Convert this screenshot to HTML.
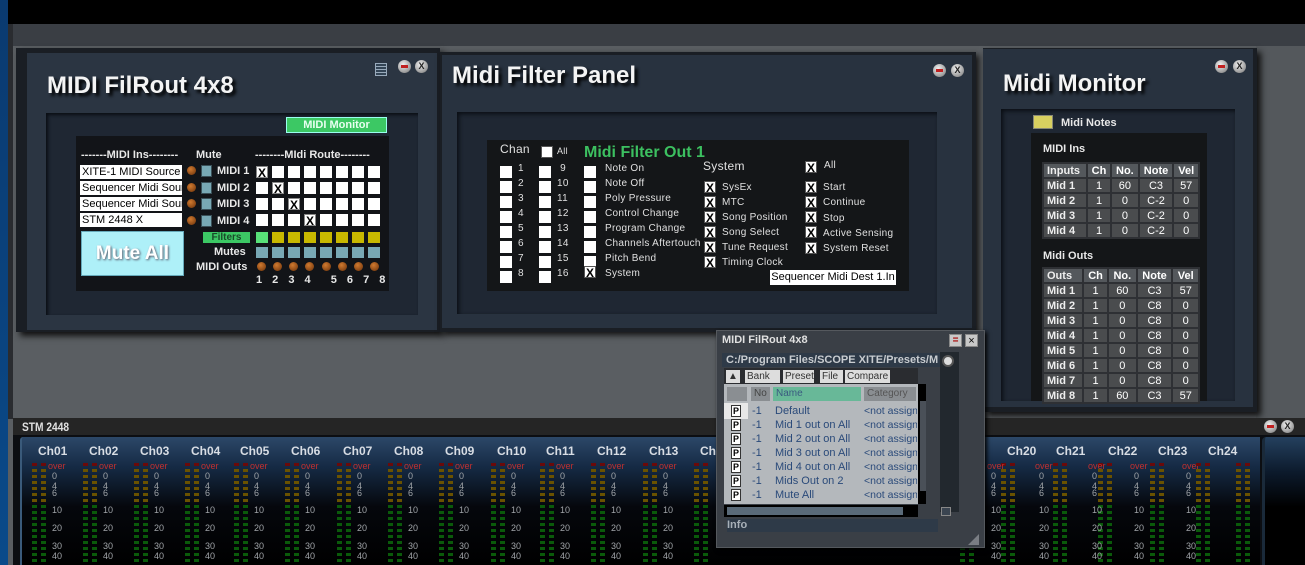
<!DOCTYPE html>
<html><head><meta charset="utf-8"><style>
*{margin:0;padding:0;box-sizing:border-box}
body{width:1305px;height:565px;overflow:hidden;background:#5a5e62;font-family:"Liberation Sans",sans-serif;position:relative}
div,span,i,b{position:absolute}
.t{font-weight:bold;color:#f4f4f4;text-shadow:3px 3px 3px #000;font-size:24px;white-space:nowrap}
.btn{width:13px;height:13px;border-radius:50%;background:radial-gradient(circle at 40% 35%,#f0f0f0,#999 70%,#555);font-size:9px;font-weight:bold;text-align:center;line-height:13px;color:#222}
.min::after{content:"";position:absolute;left:3px;top:5px;width:7px;height:3px;background:#c02020}
.in{background:#fff;color:#000;height:14px;width:102px;font-size:11px;line-height:14px;padding-left:2px;overflow:hidden;white-space:nowrap}
.dot{width:9px;height:9px;border-radius:50%;background:radial-gradient(circle at 40% 35%,#d07a30,#6a3008)}
.ms{width:11px;height:12px;background:#78a8b4;border:1px solid #3a5058}
.cb{width:12px;height:12px;background:#fff}
.cb.x{font-size:12px;font-weight:bold;line-height:12px;text-align:center;color:#000;border:1px solid #888}
.lb{font-weight:bold;font-size:11px;color:#e8e8e8}
.ck{width:12px;height:12px;background:#fff;border:1px solid #555}
.ck.x::after{content:"X";position:absolute;left:1px;top:-1px;font-size:12px;font-weight:bold;color:#000}
.fl{font-size:10px;color:#e0e0e0;white-space:nowrap;letter-spacing:.3px}
.tb td{background:#4a4c4e;border:2px solid #2e3034;color:#fff;font-size:11px;height:15px;padding:0 3px;text-align:center}
.tb td:first-child{text-align:left;font-weight:bold;color:#eee}
.tb tr:first-child td{font-weight:bold;background:#54585c}
.tb{border-collapse:collapse;position:absolute}
.ch{top:437px;width:51px;height:128px}
.ch b{top:7px;left:8px;font-size:12px;color:#d8dde4}
.lr{width:5px;height:3px;background:#6a0a0a;top:26px}
.lo{width:5px;top:32px;height:36px;background:repeating-linear-gradient(#6a5200 0 3px,transparent 3px 6px)}
.lg{width:5px;top:68px;height:60px;background:repeating-linear-gradient(#0a5a0a 0 3px,transparent 3px 6px)}
.sc span{left:22px;font-size:9px;color:#a0a4a8}
.sc span:first-child{color:#c03030;left:18px}
.tbb{top:370px;height:13px;background:#ddd;font-size:10px;line-height:13px;color:#333;padding-left:2px;white-space:nowrap;overflow:hidden}
.pi{left:731px;width:10px;height:12px;background:#fff;border:1px solid #333;font-size:9px;font-weight:bold;text-align:center;line-height:10px;color:#000}
</style></head><body>
<div style="left:0;top:0;width:8px;height:565px;background:linear-gradient(#0a3a70,#0a4a8a)"></div>
<div style="left:8px;top:0;width:1297px;height:24px;background:#000"></div>
<div style="left:8px;top:24px;width:1297px;height:22px;background:#3a3e44"></div>
<div style="left:8px;top:24px;width:5px;height:395px;background:#2a2c30"></div>
<div style="left:1256px;top:46px;width:49px;height:372px;background:#54585c"></div>

<!-- Panel 1 -->
<div style="left:16px;top:48px;width:424px;height:284px;background:#1a1e24;box-shadow:4px 4px 6px #111"></div>
<div style="left:27px;top:53px;width:410px;height:277px;background:#2b3542"></div>
<div class="t" style="left:47px;top:72px">MIDI FilRout 4x8</div>
<div style="left:375px;top:63px;width:12px;height:13px;border:1px solid #9ab;background:repeating-linear-gradient(#345 0 2px,#9ab 2px 3px)"></div>
<div class="btn min" style="left:398px;top:60px"></div>
<div class="btn" style="left:415px;top:60px">X</div>
<div style="left:46px;top:113px;width:372px;height:202px;background:#1f2733;box-shadow:2px 2px 3px #0a0e14 inset"></div>
<div style="left:286px;top:117px;width:101px;height:16px;background:#3cc864;border:1px solid #9fe;color:#e8fff0;font-weight:bold;font-size:11px;text-align:center;line-height:14px">MIDI Monitor</div>
<div style="left:76px;top:136px;width:313px;height:155px;background:#121418"></div>
<div class="lb" style="left:81px;top:149px">-------MIDI Ins--------</div>
<div class="lb" style="left:196px;top:149px">Mute</div>
<div class="lb" style="left:255px;top:149px">--------MIdi Route--------</div>
<div class="in" style="left:80px;top:165px">XITE-1 MIDI Source</div>
<div class="in" style="left:80px;top:181px">Sequencer Midi Source</div>
<div class="in" style="left:80px;top:197px">Sequencer Midi Source</div>
<div class="in" style="left:80px;top:213px">STM 2448 X</div>
<div class="dot" style="left:187px;top:166px"></div><div class="dot" style="left:187px;top:183px"></div><div class="dot" style="left:187px;top:199px"></div><div class="dot" style="left:187px;top:216px"></div>
<div class="ms" style="left:201px;top:165px"></div><div class="ms" style="left:201px;top:182px"></div><div class="ms" style="left:201px;top:198px"></div><div class="ms" style="left:201px;top:215px"></div>
<div class="lb" style="left:217px;top:165px">MIDI 1</div><div class="lb" style="left:217px;top:182px">MIDI 2</div><div class="lb" style="left:217px;top:198px">MIDI 3</div><div class="lb" style="left:217px;top:215px">MIDI 4</div>
<div style="left:256px;top:166px;width:128px;height:60px;background:repeating-linear-gradient(90deg,#fff 0 12px,transparent 12px 16px);-webkit-mask:repeating-linear-gradient(#000 0 12px,transparent 12px 16px)"></div>
<div class="cb x" style="left:256px;top:166px">X</div><div class="cb x" style="left:272px;top:182px">X</div><div class="cb x" style="left:288px;top:198px">X</div><div class="cb x" style="left:304px;top:214px">X</div>
<div style="left:81px;top:231px;width:103px;height:45px;background:#aef0f8;border:1px solid #6ab;color:#fff;font-weight:bold;font-size:19px;text-align:center;line-height:44px;text-shadow:1px 1px 2px #556">Mute All</div>
<div style="left:203px;top:232px;width:47px;height:11px;background:#3cc864;font-size:10px;font-weight:bold;color:#1a4a2a;text-align:center;line-height:11px">Filters</div>
<div style="left:256px;top:232px;width:12px;height:11px;background:#58e078"></div>
<div style="left:272px;top:232px;width:112px;height:11px;background:repeating-linear-gradient(90deg,#c8b800 0 12px,transparent 12px 16px)"></div>
<div class="lb" style="left:214px;top:246px">Mutes</div>
<div style="left:256px;top:247px;width:128px;height:11px;background:repeating-linear-gradient(90deg,#78a8b4 0 12px,transparent 12px 16px)"></div>
<div class="lb" style="left:196px;top:261px">MIDI Outs</div>
<div class="dot" style="left:257px;top:262px"></div><div class="dot" style="left:273px;top:262px"></div><div class="dot" style="left:289px;top:262px"></div><div class="dot" style="left:305px;top:262px"></div><div class="dot" style="left:322px;top:262px"></div><div class="dot" style="left:338px;top:262px"></div><div class="dot" style="left:354px;top:262px"></div><div class="dot" style="left:370px;top:262px"></div>
<div class="lb" style="left:256px;top:274px;word-spacing:7px">1 2 3 4 &nbsp;5 6 7 8</div>

<!-- Panel 2 -->
<div style="left:440px;top:52px;width:536px;height:280px;background:#1a1e24;box-shadow:3px 3px 6px #111"></div>
<div style="left:442px;top:55px;width:530px;height:273px;background:#28323f"></div>
<div class="t" style="left:452px;top:62px">Midi Filter Panel</div>
<div class="btn min" style="left:933px;top:64px"></div>
<div class="btn" style="left:951px;top:64px">X</div>
<div style="left:457px;top:112px;width:480px;height:202px;background:#1f2733;box-shadow:2px 2px 4px #0a0e14 inset"></div>
<div style="left:487px;top:140px;width:422px;height:151px;background:#141618"></div>
<div class="fl" style="left:500px;top:142px;font-size:12px">Chan</div>
<div class="ck" style="left:541px;top:146px"></div><div class="fl" style="left:557px;top:146px;font-size:9px">All</div>
<div style="left:500px;top:166px;width:12px;height:117px;background:repeating-linear-gradient(#fff 0 12px,transparent 12px 15px)"></div>
<div style="left:539px;top:166px;width:12px;height:117px;background:repeating-linear-gradient(#fff 0 12px,transparent 12px 15px)"></div>
<div class="fl" style="left:518px;top:161px;line-height:15px">1<br>2<br>3<br>4<br>5<br>6<br>7<br>8</div>
<div class="fl" style="left:557px;top:161px;line-height:15px">&nbsp;9<br>10<br>11<br>12<br>13<br>14<br>15<br>16</div>
<div style="left:584px;top:144px;font-size:16px;font-weight:bold;color:#3cc060">Midi Filter Out 1</div>
<div style="left:584px;top:166px;width:12px;height:102px;background:repeating-linear-gradient(#fff 0 12px,transparent 12px 15px)"></div>
<div class="ck x" style="left:584px;top:266px"></div>
<div class="fl" style="left:605px;top:161px;line-height:15px">Note On<br>Note Off<br>Poly Pressure<br>Control Change<br>Program Change<br>Channels Aftertouch<br>Pitch Bend<br>System</div>
<div class="fl" style="left:703px;top:159px;font-size:12px">System</div>
<div class="ck x" style="left:704px;top:181px"></div><div class="ck x" style="left:704px;top:196px"></div><div class="ck x" style="left:704px;top:211px"></div><div class="ck x" style="left:704px;top:226px"></div><div class="ck x" style="left:704px;top:241px"></div><div class="ck x" style="left:704px;top:256px"></div>
<div class="fl" style="left:722px;top:180px;line-height:15px">SysEx<br>MTC<br>Song Position<br>Song Select<br>Tune Request<br>Timing Clock</div>
<div class="ck x" style="left:805px;top:161px"></div><div class="fl" style="left:824px;top:160px">All</div>
<div class="ck x" style="left:805px;top:181px"></div><div class="ck x" style="left:805px;top:196px"></div><div class="ck x" style="left:805px;top:211px"></div><div class="ck x" style="left:805px;top:226px"></div><div class="ck x" style="left:805px;top:242px"></div>
<div class="fl" style="left:823px;top:180px;line-height:15.3px">Start<br>Continue<br>Stop<br>Active Sensing<br>System Reset</div>
<div style="left:770px;top:270px;width:126px;height:15px;background:#fff;font-size:11px;color:#000;text-align:center;line-height:15px">Sequencer Midi Dest 1.In</div>

<!-- Panel 3 -->
<div style="left:983px;top:48px;width:274px;height:364px;background:#1a1e24;box-shadow:4px 4px 6px #111"></div>
<div style="left:983px;top:49px;width:270px;height:358px;background:#28323f"></div>
<div class="t" style="left:1003px;top:70px">Midi Monitor</div>
<div class="btn min" style="left:1215px;top:60px"></div>
<div class="btn" style="left:1233px;top:60px">X</div>
<div style="left:1001px;top:109px;width:234px;height:292px;background:#1f2733;box-shadow:2px 2px 4px #0a0e14 inset"></div>
<div style="left:1033px;top:115px;width:20px;height:14px;background:#d8d060;border:1px solid #887"></div>
<div class="lb" style="left:1061px;top:117px">Midi Notes</div>
<div style="left:1031px;top:133px;width:176px;height:268px;background:#141618"></div>
<div class="lb" style="left:1043px;top:143px">MIDI Ins</div>
<table class="tb" style="left:1042px;top:162px;width:158px"><tr><td>Inputs</td><td>Ch</td><td>No.</td><td>Note</td><td>Vel</td></tr>
<tr><td>Mid 1</td><td>1</td><td>60</td><td>C3</td><td>57</td></tr><tr><td>Mid 2</td><td>1</td><td>0</td><td>C-2</td><td>0</td></tr><tr><td>Mid 3</td><td>1</td><td>0</td><td>C-2</td><td>0</td></tr><tr><td>Mid 4</td><td>1</td><td>0</td><td>C-2</td><td>0</td></tr></table>
<div class="lb" style="left:1043px;top:250px">Midi Outs</div>
<table class="tb" style="left:1042px;top:267px;width:158px"><tr><td>Outs</td><td>Ch</td><td>No.</td><td>Note</td><td>Vel</td></tr>
<tr><td>Mid 1</td><td>1</td><td>60</td><td>C3</td><td>57</td></tr><tr><td>Mid 2</td><td>1</td><td>0</td><td>C8</td><td>0</td></tr><tr><td>Mid 3</td><td>1</td><td>0</td><td>C8</td><td>0</td></tr><tr><td>Mid 4</td><td>1</td><td>0</td><td>C8</td><td>0</td></tr><tr><td>Mid 5</td><td>1</td><td>0</td><td>C8</td><td>0</td></tr><tr><td>Mid 6</td><td>1</td><td>0</td><td>C8</td><td>0</td></tr><tr><td>Mid 7</td><td>1</td><td>0</td><td>C8</td><td>0</td></tr><tr><td>Mid 8</td><td>1</td><td>60</td><td>C3</td><td>57</td></tr></table>

<!-- STM bar -->
<div style="left:13px;top:418px;width:1292px;height:17px;background:#252525"></div>
<div style="left:22px;top:420px;font-size:12px;font-weight:bold;color:#e0e0e0;transform:scaleX(.85);transform-origin:left">STM 2448</div>
<div class="btn min" style="left:1264px;top:420px"></div>
<div class="btn" style="left:1281px;top:420px">X</div>
<div style="left:13px;top:435px;width:1292px;height:130px;background:#0c0e12"></div>
<div style="left:20px;top:437px;width:1240px;height:128px;background:linear-gradient(#2c4868,#152a44 30px,#05070c 70px,#000);border-left:2px solid #3a5a7a;border-radius:3px 0 0 0"></div>
<div style="left:1262px;top:437px;width:43px;height:128px;background:linear-gradient(#24405e,#0c1a2c 35px,#000 70px);border-left:3px solid #1a2a3a;border-radius:4px 0 0 0"></div>

<div class="ch" style="left:30px"><b>Ch01</b><i class="lr" style="left:2px"></i><i class="lr" style="left:11px"></i><i class="lo" style="left:2px"></i><i class="lo" style="left:11px"></i><i class="lg" style="left:2px"></i><i class="lg" style="left:11px"></i><div class="sc"><span style="top:24px">over</span><span style="top:34px">0</span><span style="top:44px">4</span><span style="top:51px">6</span><span style="top:68px">10</span><span style="top:86px">20</span><span style="top:104px">30</span><span style="top:114px">40</span></div></div>
<div class="ch" style="left:81px"><b>Ch02</b><i class="lr" style="left:2px"></i><i class="lr" style="left:11px"></i><i class="lo" style="left:2px"></i><i class="lo" style="left:11px"></i><i class="lg" style="left:2px"></i><i class="lg" style="left:11px"></i><div class="sc"><span style="top:24px">over</span><span style="top:34px">0</span><span style="top:44px">4</span><span style="top:51px">6</span><span style="top:68px">10</span><span style="top:86px">20</span><span style="top:104px">30</span><span style="top:114px">40</span></div></div>
<div class="ch" style="left:132px"><b>Ch03</b><i class="lr" style="left:2px"></i><i class="lr" style="left:11px"></i><i class="lo" style="left:2px"></i><i class="lo" style="left:11px"></i><i class="lg" style="left:2px"></i><i class="lg" style="left:11px"></i><div class="sc"><span style="top:24px">over</span><span style="top:34px">0</span><span style="top:44px">4</span><span style="top:51px">6</span><span style="top:68px">10</span><span style="top:86px">20</span><span style="top:104px">30</span><span style="top:114px">40</span></div></div>
<div class="ch" style="left:183px"><b>Ch04</b><i class="lr" style="left:2px"></i><i class="lr" style="left:11px"></i><i class="lo" style="left:2px"></i><i class="lo" style="left:11px"></i><i class="lg" style="left:2px"></i><i class="lg" style="left:11px"></i><div class="sc"><span style="top:24px">over</span><span style="top:34px">0</span><span style="top:44px">4</span><span style="top:51px">6</span><span style="top:68px">10</span><span style="top:86px">20</span><span style="top:104px">30</span><span style="top:114px">40</span></div></div>
<div class="ch" style="left:232px"><b>Ch05</b><i class="lr" style="left:2px"></i><i class="lr" style="left:11px"></i><i class="lo" style="left:2px"></i><i class="lo" style="left:11px"></i><i class="lg" style="left:2px"></i><i class="lg" style="left:11px"></i><div class="sc"><span style="top:24px">over</span><span style="top:34px">0</span><span style="top:44px">4</span><span style="top:51px">6</span><span style="top:68px">10</span><span style="top:86px">20</span><span style="top:104px">30</span><span style="top:114px">40</span></div></div>
<div class="ch" style="left:283px"><b>Ch06</b><i class="lr" style="left:2px"></i><i class="lr" style="left:11px"></i><i class="lo" style="left:2px"></i><i class="lo" style="left:11px"></i><i class="lg" style="left:2px"></i><i class="lg" style="left:11px"></i><div class="sc"><span style="top:24px">over</span><span style="top:34px">0</span><span style="top:44px">4</span><span style="top:51px">6</span><span style="top:68px">10</span><span style="top:86px">20</span><span style="top:104px">30</span><span style="top:114px">40</span></div></div>
<div class="ch" style="left:335px"><b>Ch07</b><i class="lr" style="left:2px"></i><i class="lr" style="left:11px"></i><i class="lo" style="left:2px"></i><i class="lo" style="left:11px"></i><i class="lg" style="left:2px"></i><i class="lg" style="left:11px"></i><div class="sc"><span style="top:24px">over</span><span style="top:34px">0</span><span style="top:44px">4</span><span style="top:51px">6</span><span style="top:68px">10</span><span style="top:86px">20</span><span style="top:104px">30</span><span style="top:114px">40</span></div></div>
<div class="ch" style="left:386px"><b>Ch08</b><i class="lr" style="left:2px"></i><i class="lr" style="left:11px"></i><i class="lo" style="left:2px"></i><i class="lo" style="left:11px"></i><i class="lg" style="left:2px"></i><i class="lg" style="left:11px"></i><div class="sc"><span style="top:24px">over</span><span style="top:34px">0</span><span style="top:44px">4</span><span style="top:51px">6</span><span style="top:68px">10</span><span style="top:86px">20</span><span style="top:104px">30</span><span style="top:114px">40</span></div></div>
<div class="ch" style="left:437px"><b>Ch09</b><i class="lr" style="left:2px"></i><i class="lr" style="left:11px"></i><i class="lo" style="left:2px"></i><i class="lo" style="left:11px"></i><i class="lg" style="left:2px"></i><i class="lg" style="left:11px"></i><div class="sc"><span style="top:24px">over</span><span style="top:34px">0</span><span style="top:44px">4</span><span style="top:51px">6</span><span style="top:68px">10</span><span style="top:86px">20</span><span style="top:104px">30</span><span style="top:114px">40</span></div></div>
<div class="ch" style="left:489px"><b>Ch10</b><i class="lr" style="left:2px"></i><i class="lr" style="left:11px"></i><i class="lo" style="left:2px"></i><i class="lo" style="left:11px"></i><i class="lg" style="left:2px"></i><i class="lg" style="left:11px"></i><div class="sc"><span style="top:24px">over</span><span style="top:34px">0</span><span style="top:44px">4</span><span style="top:51px">6</span><span style="top:68px">10</span><span style="top:86px">20</span><span style="top:104px">30</span><span style="top:114px">40</span></div></div>
<div class="ch" style="left:538px"><b>Ch11</b><i class="lr" style="left:2px"></i><i class="lr" style="left:11px"></i><i class="lo" style="left:2px"></i><i class="lo" style="left:11px"></i><i class="lg" style="left:2px"></i><i class="lg" style="left:11px"></i><div class="sc"><span style="top:24px">over</span><span style="top:34px">0</span><span style="top:44px">4</span><span style="top:51px">6</span><span style="top:68px">10</span><span style="top:86px">20</span><span style="top:104px">30</span><span style="top:114px">40</span></div></div>
<div class="ch" style="left:589px"><b>Ch12</b><i class="lr" style="left:2px"></i><i class="lr" style="left:11px"></i><i class="lo" style="left:2px"></i><i class="lo" style="left:11px"></i><i class="lg" style="left:2px"></i><i class="lg" style="left:11px"></i><div class="sc"><span style="top:24px">over</span><span style="top:34px">0</span><span style="top:44px">4</span><span style="top:51px">6</span><span style="top:68px">10</span><span style="top:86px">20</span><span style="top:104px">30</span><span style="top:114px">40</span></div></div>
<div class="ch" style="left:641px"><b>Ch13</b><i class="lr" style="left:2px"></i><i class="lr" style="left:11px"></i><i class="lo" style="left:2px"></i><i class="lo" style="left:11px"></i><i class="lg" style="left:2px"></i><i class="lg" style="left:11px"></i><div class="sc"><span style="top:24px">over</span><span style="top:34px">0</span><span style="top:44px">4</span><span style="top:51px">6</span><span style="top:68px">10</span><span style="top:86px">20</span><span style="top:104px">30</span><span style="top:114px">40</span></div></div>
<div class="ch" style="left:692px"><b>Ch14</b><i class="lr" style="left:2px"></i><i class="lr" style="left:11px"></i><i class="lo" style="left:2px"></i><i class="lo" style="left:11px"></i><i class="lg" style="left:2px"></i><i class="lg" style="left:11px"></i></div>
<div class="ch" style="left:948px"><i class="lr" style="left:12px"></i><i class="lr" style="left:21px"></i><i class="lo" style="left:12px"></i><i class="lo" style="left:21px"></i><i class="lg" style="left:12px"></i><i class="lg" style="left:21px"></i></div>
<div class="ch" style="left:999px"><b>Ch20</b><i class="lr" style="left:2px"></i><i class="lr" style="left:11px"></i><i class="lo" style="left:2px"></i><i class="lo" style="left:11px"></i><i class="lg" style="left:2px"></i><i class="lg" style="left:11px"></i><div class="sc"><span style="top:24px;left:-12px">over</span><span style="top:34px;left:-8px">0</span><span style="top:44px;left:-8px">4</span><span style="top:51px;left:-8px">6</span><span style="top:68px;left:-8px">10</span><span style="top:86px;left:-8px">20</span><span style="top:104px;left:-8px">30</span><span style="top:114px;left:-8px">40</span><span style="top:24px;left:36px;color:#c03030">over</span><span style="top:34px;left:40px">0</span><span style="top:44px;left:40px">4</span><span style="top:51px;left:40px">6</span><span style="top:68px;left:40px">10</span><span style="top:86px;left:40px">20</span><span style="top:104px;left:40px">30</span><span style="top:114px;left:40px">40</span></div></div>
<div class="ch" style="left:1048px"><b>Ch21</b><i class="lr" style="left:5px"></i><i class="lr" style="left:14px"></i><i class="lo" style="left:5px"></i><i class="lo" style="left:14px"></i><i class="lg" style="left:5px"></i><i class="lg" style="left:14px"></i></div>
<div class="ch" style="left:1100px"><b>Ch22</b><i class="lr" style="left:-2px"></i><i class="lr" style="left:7px"></i><i class="lo" style="left:-2px"></i><i class="lo" style="left:7px"></i><i class="lg" style="left:-2px"></i><i class="lg" style="left:7px"></i><div class="sc"><span style="top:24px;left:-12px">over</span><span style="top:34px;left:-8px">0</span><span style="top:44px;left:-8px">4</span><span style="top:51px;left:-8px">6</span><span style="top:68px;left:-8px">10</span><span style="top:86px;left:-8px">20</span><span style="top:104px;left:-8px">30</span><span style="top:114px;left:-8px">40</span><span style="top:24px;left:30px;color:#c03030">over</span><span style="top:34px;left:34px">0</span><span style="top:44px;left:34px">4</span><span style="top:51px;left:34px">6</span><span style="top:68px;left:34px">10</span><span style="top:86px;left:34px">20</span><span style="top:104px;left:34px">30</span><span style="top:114px;left:34px">40</span></div></div>
<div class="ch" style="left:1150px"><b>Ch23</b><i class="lr" style="left:0px"></i><i class="lr" style="left:9px"></i><i class="lo" style="left:0px"></i><i class="lo" style="left:9px"></i><i class="lg" style="left:0px"></i><i class="lg" style="left:9px"></i><div class="sc"><span style="top:24px;left:32px;color:#c03030">over</span><span style="top:34px;left:36px">0</span><span style="top:44px;left:36px">4</span><span style="top:51px;left:36px">6</span><span style="top:68px;left:36px">10</span><span style="top:86px;left:36px">20</span><span style="top:104px;left:36px">30</span><span style="top:114px;left:36px">40</span></div></div>
<div class="ch" style="left:1200px"><b>Ch24</b><i class="lr" style="left:-4px"></i><i class="lr" style="left:5px"></i><i class="lo" style="left:-4px"></i><i class="lo" style="left:5px"></i><i class="lg" style="left:-4px"></i><i class="lg" style="left:5px"></i><i class="lr" style="left:36px"></i><i class="lr" style="left:45px"></i><i class="lo" style="left:36px"></i><i class="lo" style="left:45px"></i><i class="lg" style="left:36px"></i><i class="lg" style="left:45px"></i></div>

<!-- Floating preset window -->
<div style="left:716px;top:330px;width:269px;height:218px;background:#3a3f46;border:1px solid #55595e;box-shadow:2px 2px 4px #000"></div>
<div style="left:722px;top:334px;font-size:11px;font-weight:bold;color:#e0e0e0">MIDI FilRout 4x8</div>
<div style="left:949px;top:334px;width:13px;height:13px;background:#c8c8c8;border:1px solid #888;font-size:10px;text-align:center;line-height:11px;color:#a00;font-weight:bold">=</div>
<div style="left:965px;top:334px;width:13px;height:13px;background:#c8c8c8;border:1px solid #888;font-size:11px;text-align:center;line-height:12px;color:#000">×</div>
<div style="left:940px;top:352px;width:19px;height:160px;background:#22282e"></div>
<div style="left:722px;top:353px;width:218px;height:14px;background:#2e3a48;font-size:11px;font-weight:bold;color:#c8ccd0;line-height:14px;padding-left:4px;white-space:nowrap;overflow:hidden">C:/Program Files/SCOPE XITE/Presets/M</div>
<div style="left:942px;top:355px;width:12px;height:12px;border-radius:50%;background:#ddd;border:2px solid #555"></div>
<div style="left:724px;top:368px;width:194px;height:16px;background:#2a2c30"></div>
<div class="tbb" style="left:726px;width:14px;text-align:center;padding:0">▲</div>
<div class="tbb" style="left:745px;width:35px">Bank</div>
<div class="tbb" style="left:783px;width:31px">Preset</div>
<div class="tbb" style="left:820px;width:23px">File</div>
<div class="tbb" style="left:845px;width:45px">Compare</div>
<div style="left:724px;top:384px;width:194px;height:120px;background:#b4b8bc"></div>
<div style="left:727px;top:387px;width:20px;height:14px;background:#8a8e92"></div>
<div style="left:751px;top:387px;width:19px;height:14px;background:#8a8e92;font-size:10px;color:#444;padding-left:3px;line-height:14px">No</div>
<div style="left:773px;top:387px;width:88px;height:14px;background:#68b898;font-size:10px;color:#3a5a80;padding-left:3px;line-height:14px">Name</div>
<div style="left:864px;top:387px;width:52px;height:14px;background:#8a8e92;font-size:10px;color:#555;padding-left:3px;line-height:14px;overflow:hidden">Category</div>
<div style="left:724px;top:403px;width:24px;height:16px;background:#e8e8e8"></div>
<div class="pi" style="top:405px">P</div><div class="pi" style="top:419px">P</div><div class="pi" style="top:433px">P</div><div class="pi" style="top:447px">P</div><div class="pi" style="top:461px">P</div><div class="pi" style="top:475px">P</div><div class="pi" style="top:489px">P</div>
<div style="left:752px;top:404px;font-size:11px;line-height:14px;color:#2a4a7a">-1<br>-1<br>-1<br>-1<br>-1<br>-1<br>-1</div>
<div style="left:775px;top:404px;font-size:11px;line-height:14px;color:#2a4a7a;white-space:nowrap">Default<br>Mid 1 out on All<br>Mid 2 out on All<br>Mid 3 out on All<br>Mid 4 out on All<br>Mids Out on 2<br>Mute All</div>
<div style="left:864px;top:404px;width:53px;overflow:hidden;font-size:10.5px;line-height:14px;color:#2a4a7a;white-space:nowrap">&lt;not assigned<br>&lt;not assigned<br>&lt;not assigned<br>&lt;not assigned<br>&lt;not assigned<br>&lt;not assigned<br>&lt;not assigned</div>
<div style="left:918px;top:384px;width:8px;height:120px;background:#000"></div>
<div style="left:920px;top:401px;width:6px;height:90px;background:#4a5058"></div>
<div style="left:724px;top:505px;width:194px;height:12px;background:#000"></div>
<div style="left:727px;top:507px;width:176px;height:8px;background:#5a6a78"></div>
<div style="left:941px;top:507px;width:10px;height:9px;background:#3a4450;border:1px solid #888"></div>
<div style="left:727px;top:519px;width:211px;height:13px;background:#2e3a48;font-size:11px;font-weight:bold;color:#a8b0b8;line-height:13px">Info</div>
<div style="left:968px;top:534px;width:0;height:0;border-left:11px solid transparent;border-bottom:11px solid #7a7e84"></div>
</body></html>
